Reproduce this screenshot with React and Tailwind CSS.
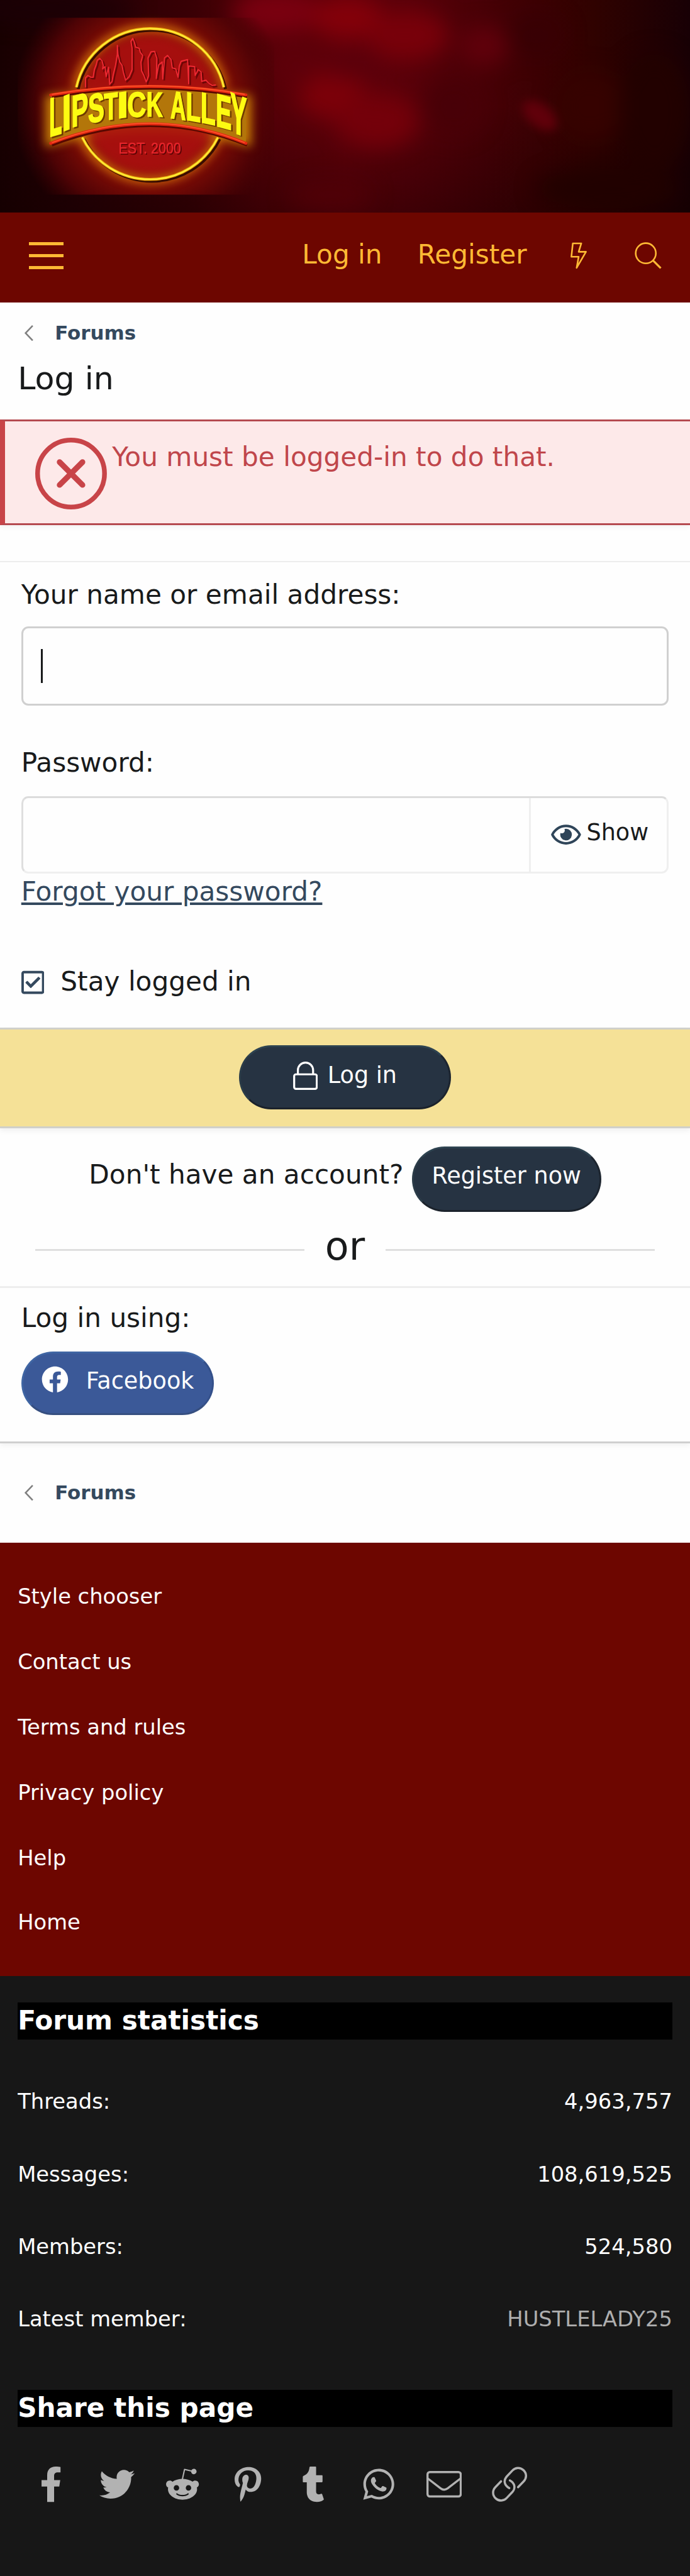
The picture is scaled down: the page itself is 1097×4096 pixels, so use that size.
import React from 'react';
import {
  FaFacebookF,
  FaTwitter,
  FaRedditAlien,
  FaPinterestP,
  FaTumblr,
  FaWhatsapp,
  FaFacebook,
  FaRegEye,
  FaRegCheckSquare,
} from 'react-icons/fa';

// Sign letters: glyph, left, right, top, bottom-left, bottom-right
const SIGN = [
  ['L', 86, 104, 165, 232, 225],
  ['I', 109, 117, 163, 223, 219],
  ['P', 124, 148, 160, 216, 207],
  ['S', 151, 175, 159, 209, 203],
  ['T', 177, 199, 158, 204, 200],
  ['I', 203, 213, 157, 201, 199],
  ['C', 218, 246, 157, 199, 197],
  ['K', 251, 276, 157, 197, 198],
  ['A', 289, 315, 157, 200, 205],
  ['L', 318, 339, 159, 203, 208],
  ['L', 343, 364, 160, 207, 213],
  ['E', 369, 391, 163, 213, 221],
  ['Y', 391, 418, 164, 222, 236],
];

// Ink extents of the bold capitals at font size 100
const INK = {
  L: [7, 58],
  I: [7, 21],
  P: [7, 63],
  S: [4, 62],
  T: [2, 59],
  C: [5, 68],
  K: [7, 72],
  A: [0, 72],
  E: [7, 62],
  Y: [1, 66],
};

function SignText({ fill, dx = 0, dy = 0 }) {
  return (
    <g fill={fill} fontFamily="Liberation Sans" fontWeight="700" fontSize="100">
      {SIGN.map(([ch, l, r, t, b1, b2], i) => {
        const [i0, i1] = INK[ch];
        const sx = (r - l) / (i1 - i0);
        const sy = ((b1 + b2) / 2 - t) / 68.8;
        const slope = ((b2 - b1) / (r - l)) * 0.75 * sx;
        return (
          <text
            key={i}
            stroke={fill}
            strokeWidth="3"
            transform={`matrix(${sx} ${slope} 0 ${sy} ${l - i0 * sx + dx} ${b1 + dy})`}
          >
            {ch}
          </text>
        );
      })}
    </g>
  );
}

const SKYLINE =
  'M145 148V132L149 128L154 131L158 131L160 118L163 110L165 102L169 99L173 103L175 111L174 117L178 113L180 130L184 114L186 143L190 138L192 127L196 110L199 92L199 77L200 92L203 105L207 111L209 122L213 136L219 130L224 118V82L222 70L225 65L228 72L230 80L236 82L238 89L242 94L239 105L240 120L244 128L248 139L252 128L251 98L256 88L262 87L266 99L265 133L269 110L275 105L276 134L279 98L284 94L290 101L292 115L298 117L302 131L304 112L307 104L318 101L320 142V112L330 113L331 128L336 118L341 122L342 138L349 136L355 142L360 145L366 144';

function Logo() {
  const ring = 'M129.500 148A128 127 0 0 1 379.500 148M139.500 233A128 127 0 0 0 369.500 233';
  return (
    <svg
      viewBox="0 0 1170 360"
      preserveAspectRatio="none"
      className="block h-120 w-390"
      role="img"
      aria-label="Lipstick Alley"
      colorInterpolationFilters="sRGB"
    >
      <defs>
        <linearGradient id="base" x1="0" x2="1" y1="0" y2="0">
          <stop offset="0" stopColor="#180001" />
          <stop offset="0.1" stopColor="#230004" />
          <stop offset="0.28" stopColor="#3a0005" />
          <stop offset="0.38" stopColor="#540007" />
          <stop offset="0.5" stopColor="#62000a" />
          <stop offset="0.6" stopColor="#580009" />
          <stop offset="0.7" stopColor="#480006" />
          <stop offset="0.86" stopColor="#300200" />
          <stop offset="1" stopColor="#180005" />
        </linearGradient>
        <linearGradient id="shade" x1="0" x2="0" y1="0" y2="1">
          <stop offset="0.5" stopColor="#120000" stopOpacity="0" />
          <stop offset="1" stopColor="#120000" stopOpacity="0.38" />
        </linearGradient>
        <radialGradient id="halo" gradientUnits="userSpaceOnUse" cx="255" cy="178" r="235">
          <stop offset="0" stopColor="#a80f0c" />
          <stop offset="0.52" stopColor="#8d1308" />
          <stop offset="0.62" stopColor="#740a05" />
          <stop offset="0.8" stopColor="#530305" stopOpacity="0.9" />
          <stop offset="1" stopColor="#400003" stopOpacity="0" />
        </radialGradient>
        <filter id="blur20" x="-50%" y="-50%" width="200%" height="200%"><feGaussianBlur stdDeviation="18" /></filter>
        <filter id="blur8" x="-30%" y="-30%" width="160%" height="160%"><feGaussianBlur stdDeviation="8" /></filter>
        <filter id="blur1" x="-10%" y="-10%" width="120%" height="120%"><feGaussianBlur stdDeviation="0.8" /></filter>
      </defs>
      <rect width="1170" height="360" fill="url(#base)" />
      <rect width="1170" height="360" fill="url(#shade)" />
      <g filter="url(#blur20)">
        <ellipse cx="470" cy="20" rx="75" ry="36" fill="#7a0010" />
        <ellipse cx="590" cy="30" rx="60" ry="34" fill="#84000a" />
        <ellipse cx="690" cy="60" rx="70" ry="42" fill="#78000a" />
        <ellipse cx="560" cy="155" rx="54" ry="44" fill="#7c0009" />
        <ellipse cx="640" cy="205" rx="70" ry="46" fill="#74000a" />
        <ellipse cx="600" cy="110" rx="60" ry="22" fill="#5a000b" />
        <ellipse cx="500" cy="110" rx="40" ry="40" fill="#5e000a" />
        <ellipse cx="820" cy="78" rx="42" ry="34" fill="#60000b" />
        <ellipse cx="910" cy="60" rx="46" ry="36" fill="#380004" />
        <ellipse cx="770" cy="180" rx="50" ry="50" fill="#480007" />
        <ellipse cx="560" cy="330" rx="70" ry="24" fill="#500007" />
        <ellipse cx="80" cy="14" rx="150" ry="22" fill="#1b0006" />
        <ellipse cx="1000" cy="180" rx="60" ry="60" fill="#360200" />
        <ellipse cx="1110" cy="190" rx="60" ry="100" fill="#220100" />
        <ellipse cx="1030" cy="320" rx="120" ry="34" fill="#210100" />
      </g>
      <ellipse cx="915" cy="196" rx="34" ry="19" transform="rotate(38 915 196)" fill="#60000a" filter="url(#blur8)" />
      <path d="M30 30H465V330H30Z" fill="url(#halo)" />
      <g filter="url(#blur8)" fill="none">
        <path d={ring} stroke="#d27a08" strokeWidth="12" />
        <path d="M84 168Q255 150 419 168V240Q255 195 84 240Z" fill="#c98a06" stroke="#c07a06" strokeWidth="14" />
      </g>
      <circle cx="254.500" cy="177" r="116" fill="#a90f0f" filter="url(#blur8)" opacity="0.85" />
      <path d="M86 161Q255 132 417 161V243Q255 177 86 243Z" fill="#b3760a" filter="url(#blur1)" />
      <g fill="none" filter="url(#blur1)">
        <path d={ring} stroke="#3a0d00" strokeWidth="5" transform="translate(3 3)" />
        <path d={ring} stroke="#e9a60c" strokeWidth="5" />
        <path d={ring} stroke="#fff03a" strokeWidth="2.4" />
        <path d={SKYLINE} stroke="#6b0606" strokeWidth="2.5" transform="translate(2.500 2.500)" />
        <path d={SKYLINE} stroke="#ee2a33" strokeWidth="2" strokeLinejoin="round" />
        <path d="M86 161Q255 132 417 161M86 243Q255 177 417 243" stroke="#5a0800" strokeWidth="5" transform="translate(2 3)" />
        <path d="M86 161Q255 132 417 161M86 243Q255 177 417 243" stroke="#e32712" strokeWidth="5" strokeLinecap="round" />
        <path d="M88 160Q255 131 415 160M88 242Q255 176 415 242" stroke="#ff5a2c" strokeWidth="1.6" />
      </g>
      <g filter="url(#blur1)">
        <SignText fill="#6e3a00" dx={2.5} dy={2} />
        <SignText fill="#fdfb12" />
        <text x="203" y="262" fontFamily="Liberation Sans" fontSize="26" fill="#5a0505" textLength="106" lengthAdjust="spacingAndGlyphs">EST. 2000</text>
        <text x="201" y="260" fontFamily="Liberation Sans" fontSize="26" fill="#e6262c" stroke="#e6262c" strokeWidth="0.5" textLength="106" lengthAdjust="spacingAndGlyphs">EST. 2000</text>
      </g>
    </svg>
  );
}

function Breadcrumb() {
  return (
    <nav className="flex h-34.5 items-center pl-14">
      <svg viewBox="0 0 5 9" className="h-9 w-5" fill="none" stroke="#808080" strokeWidth="0.9">
        <path d="M4.600 0.300L0.600 4.500L4.600 8.700" />
      </svg>
      <a className="ml-12 text-[calc(var(--spacing)*11)] font-bold text-[#34495e]">Forums</a>
    </nav>
  );
}

function Line({ color }) {
  return <div className={`h-1 ${color}`} />;
}

const LINKS = ['Style chooser', 'Contact us', 'Terms and rules', 'Privacy policy', 'Help', 'Home'];

const STATS = [
  ['Threads:', '4,963,757'],
  ['Messages:', '108,619,525'],
  ['Members:', '524,580'],
  ['Latest member:', 'HUSTLELADY25'],
];

const SHARE = [FaFacebookF, FaTwitter, FaRedditAlien, FaPinterestP, FaTumblr, FaWhatsapp];

const pill =
  'flex items-center justify-center rounded-full border-[3px] text-[calc(var(--spacing)*13)] text-white';

export default function App() {
  return (
    <div className="min-h-[4096px] w-[1097px] overflow-hidden bg-[#171717] [--spacing:2.8128px] font-['DejaVu_Sans',sans-serif] text-[calc(var(--spacing)*15)] leading-none text-[#181a1b] whitespace-nowrap">
      <header className="h-120 bg-[#300003]">
        <Logo />
      </header>

      <div className="flex h-51 items-center bg-[#6d0600] pr-4 pb-2 pl-16.5 text-[#feb934]">
        <div className="flex w-19.25 flex-col gap-5.25">
          <span className="h-1.5 bg-[#feb934]" />
          <span className="h-1.5 bg-[#feb934]" />
          <span className="h-1.5 bg-[#feb934]" />
        </div>
        <a className="mr-20 ml-auto pb-1">Log in</a>
        <a className="mr-9.75 pb-1">Register</a>
        <span className="flex w-39.25 justify-center">
          <svg viewBox="0 0 28 46" className="h-15.25 w-9.25" fill="none" stroke="currentColor" strokeWidth="2.8" strokeLinejoin="round">
            <path d="M4 2H18.500L14 16.500H26.500L10.500 44L14 25H1.500Z" />
          </svg>
        </span>
        <span className="flex w-39.25 justify-center">
          <svg viewBox="0 0 46 46" className="size-15.25" fill="none" stroke="currentColor" strokeWidth="2.8">
            <circle cx="19" cy="19" r="17.200" />
            <path d="M31 31L44.500 44.500" strokeWidth="3.4" />
          </svg>
        </span>
      </div>

      <main className="h-701 bg-[#fefefe]">
        <Breadcrumb />
        <h1 className="mb-15 flex h-16.5 items-center pt-0.5 pl-10 text-[calc(var(--spacing)*18)]">Log in</h1>

        <div className="flex h-60 items-start border-y-[3px] border-y-[#b54a50] border-l-[8px] border-l-[#c84448] bg-[#fde9e9] pl-17 text-[#c0464b] shadow-[0_3px_8px_rgba(0,0,0,0.05)]">
          <svg viewBox="0 0 122 122" className="mt-9.25 size-40.5" fill="none" stroke="#c84448">
            <circle cx="61" cy="61" r="57" strokeWidth="8" />
            <path d="M41.500 41.500L80.500 80.500M80.500 41.500L41.500 80.500" strokeWidth="9.5" strokeLinecap="round" />
          </svg>
          <p className="mt-9.75 ml-3 leading-[calc(var(--spacing)*21)]">You must be logged-in to do that.</p>
        </div>

        <form className="mt-20">
          <Line color="bg-[#ededed]" />
          <div className="px-12">
            <label className="flex h-36 items-center pt-0.75">Your name or email address:</label>
            <div className="flex h-45 items-center rounded-[calc(var(--spacing)*4)] border-[3px] border-[#d0d0d0] pl-10">
              <span className="h-19 w-1 bg-[#181a1b]" />
            </div>
            <label className="flex h-51 items-center pt-13.5">Password:</label>
            <div className="flex h-44 rounded-[calc(var(--spacing)*4)] border-[3px] border-t-[#dcdcdc] border-r-[#efefef] border-b-[#efefef] border-l-[#dfdfdf]">
              <span className="grow" />
              <span className="flex w-78 items-center border-l-[3px] border-[#efefef] pl-11.5">
                <FaRegEye className="h-15 w-17 text-[#2f4559]" />
                <span className="ml-3 pb-2.5 text-[calc(var(--spacing)*13)]">Show</span>
              </span>
            </div>
            <a className="flex h-19.5 items-center pt-1 text-[#34495e] underline">Forgot your password?</a>
            <label className="mt-31 mb-16 flex h-20.5 items-center">
              <FaRegCheckSquare className="mt-1 h-15 w-13 text-[#34495e]" />
              <span className="ml-9.25 pt-0.75">Stay logged in</span>
            </label>
          </div>
          <div className="flex h-57 justify-center border-y-[3px] border-[#d0d0ca] bg-[#f5e197] pt-9 shadow-[0_4px_8px_rgba(0,0,0,0.06)]">
            <button type="button" className={`${pill} h-36 w-119.75 border-t-[#2e4350] border-r-[#1d252f] border-b-[#1b222b] border-l-[#2b3c48] bg-[#263342]`}>
              <svg viewBox="0 0 14 16" className="mb-1.5 h-16 w-14" fill="none" stroke="white" strokeWidth="1.15">
                <rect x="0.600" y="7.200" width="12.800" height="8.200" rx="1" />
                <path d="M2.700 7V4.900A4.300 4.300 0 0 1 11.300 4.900V7" />
              </svg>
              <span className="ml-5.5 pb-2">Log in</span>
            </button>
          </div>
          <div className="mt-10 flex h-37 items-center justify-center">
            <span className="pb-4.5">Don't have an account?</span>
            <button type="button" className={`${pill} ml-4.75 h-37 w-107 border-t-[#2e4350] border-r-[#1d252f] border-b-[#1b222b] border-l-[#2b3c48] bg-[#263342]`}>
              <span className="pb-3">Register now</span>
            </button>
          </div>
          <div className="flex h-42 items-center justify-between px-20 pt-1">
            <span className="h-1 w-152 bg-[#dfdfdf]" />
            <span className="pb-3 text-[calc(var(--spacing)*22)]">or</span>
            <span className="h-1 w-152 bg-[#dfdfdf]" />
          </div>
          <Line color="bg-[#eeeeee]" />
          <div className="border-b-[3px] border-[#cfcfcf] px-12 pb-15 shadow-[0_4px_8px_rgba(0,0,0,0.05)]">
            <label className="flex h-36 items-center pb-1.75">Log in using:</label>
            <button type="button" className={`${pill} h-36 w-109 border-t-[#3f65a3] border-r-[#34508a] border-b-[#364f80] border-l-[#3f65a3] bg-[#3b5998]`}>
              <FaFacebook className="mb-4 size-15.25" />
              <span className="ml-10 pb-2">Facebook</span>
            </button>
          </div>
        </form>

        <div className="pt-10.5">
          <Breadcrumb />
        </div>
      </main>

      <ul className="h-245 bg-[#6d0600] pt-12 pl-10 text-[calc(var(--spacing)*12)] text-[#fefefe]">
        {LINKS.map((label) => (
          <li key={label} className="flex h-37 items-center last:h-35.5">
            {label}
          </li>
        ))}
      </ul>

      <footer className="bg-[#171717] px-10 pt-15 text-white">
        <h3 className="flex h-21 items-center bg-black pb-0.5 font-bold">Forum statistics</h3>
        <dl className="mt-14.75 text-[calc(var(--spacing)*12)]">
          {STATS.map(([name, value]) => (
            <div key={name} className="flex h-41 items-center justify-between last:[&>dd]:text-[#aeaeae]">
              <dt>{name}</dt>
              <dd>{value}</dd>
            </div>
          ))}
        </dl>
        <h3 className="mt-19.25 flex h-21 items-center bg-black pb-0.5 font-bold">Share this page</h3>
        <div className="mt-14.5 flex h-36 items-center pl-0.5 text-[#b2b2b2]">
          {SHARE.map((Icon, i) => (
            <span key={i} className="flex w-37 justify-center">
              <Icon className="size-20" />
            </span>
          ))}
          <span className="flex w-37 justify-center">
            <svg viewBox="0 0 60 60" className="size-20" fill="none" stroke="currentColor" strokeWidth="3.600">
              <rect x="1.800" y="9.300" width="56.400" height="41.400" rx="4" />
              <path d="M2 20L24 37Q30 41.500 36 37L58 20" />
            </svg>
          </span>
          <span className="flex w-37 justify-center">
            <svg viewBox="0 0 60 60" className="size-20" fill="none" stroke="currentColor" strokeWidth="3.700" strokeLinecap="round">
              <path d="M29.500 36.500C20.500 31.500 19.500 23 25.500 16.500L35 6.500C40 1.200 48 .8 53.500 6C59.300 11.500 59.300 19.500 54 25L44.500 35" />
              <path d="M30.500 23.500C39.500 28.500 40.500 37 34.500 43.500L25 53.500C20 58.800 12 59.200 6.500 54C.7 48.500 .7 40.500 6 35L15.500 25" />
            </svg>
          </span>
        </div>
      </footer>
    </div>
  );
}
